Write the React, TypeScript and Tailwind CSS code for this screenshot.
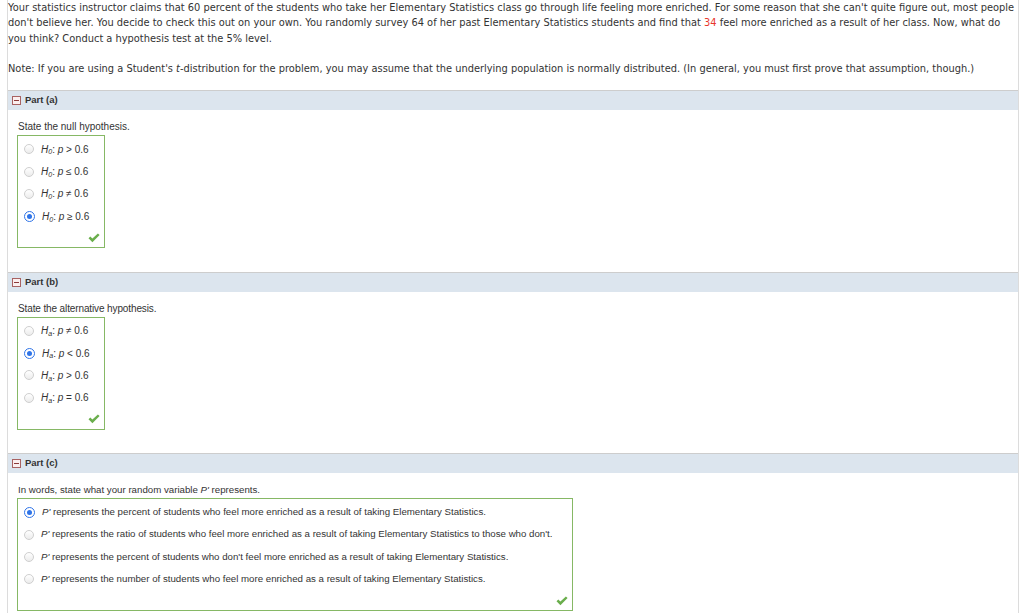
import { ReactElement, ReactNode } from "react";

const sans = { fontFamily: '"Liberation Sans", Arial, sans-serif' };
const verdana = { fontFamily: '"DejaVu Sans", Verdana, sans-serif' };

const Radio = ({ checked }: { checked?: boolean }): ReactElement =>
  checked ? (
    <span className="flex h-[11px] w-[11px] shrink-0 items-center justify-center rounded-full border-[1.5px] border-[#2f74e8] bg-white">
      <span className="h-[5px] w-[5px] rounded-full bg-[#2f74e8]" />
    </span>
  ) : (
    <span className="h-[10px] w-[10px] shrink-0 rounded-full border border-[#cfcfcf] bg-gradient-to-b from-white to-[#ececec]" />
  );

const Check = (): ReactElement => (
  <svg width="12" height="10" viewBox="0 0 12 10">
    <path d="M0.5 5.2 L2.3 3.6 L4.4 5.6 L9.9 0.4 L11.6 2 L4.4 9.2 Z" fill="#6aae4c" />
  </svg>
);

const MinusBox = (): ReactElement => (
  <span className="flex h-[9px] w-[9px] items-center justify-center border border-[#a86262] bg-[#fbefef]">
    <span className="h-px w-[5px] bg-[#8c3a3a]" />
  </span>
);

const H = ({ sub }: { sub: string }): ReactElement => (
  <>
    <i>H</i>
    <sub className="text-[7px] italic">{sub}</sub>:{" "}
  </>
);

interface Option {
  label: ReactNode;
  checked?: boolean;
}

const OptionBox = ({ options, width, text }: { options: Option[]; width: string; text: string }): ReactElement => (
  <div className={`flex h-[113px] flex-col border border-[#86b865] pt-[2px] ${width}`}>
    {options.map((o, i) => (
      <div key={i} className="flex h-[22.4px] items-center gap-[7px] pl-[6px]">
        <Radio checked={o.checked} />
        <span className={`whitespace-nowrap ${text}`}>{o.label}</span>
      </div>
    ))}
    <div className="mt-[5px] flex justify-end pr-[4px]">
      <Check />
    </div>
  </div>
);

const Part = ({
  name,
  prompt,
  promptClass,
  children,
}: {
  name: string;
  prompt: ReactNode;
  promptClass: string;
  children: ReactNode;
}): ReactElement => (
  <section className="mb-[23.5px]">
    <div className="flex h-[20px] items-center gap-[4px] border-t border-[#cdcdcd] bg-[#dce5ee] pl-[4px]">
      <MinusBox />
      <span className="text-[9.5px] font-bold text-[#333]">{name}</span>
    </div>
    <div className="pl-[9px] pt-[10px] text-[10px] text-[#333]">
      <div className={`mb-[1px] h-[14px] whitespace-nowrap pl-[1px] leading-[14px] ${promptClass}`}>{prompt}</div>
      {children}
    </div>
  </section>
);

const nullOptions: Option[] = [
  { label: <><H sub="0" /><i>p</i> &gt; 0.6</> },
  { label: <><H sub="0" /><i>p</i> ≤ 0.6</> },
  { label: <><H sub="0" /><i>p</i> ≠ 0.6</> },
  { label: <><H sub="0" /><i>p</i> ≥ 0.6</>, checked: true },
];

const altOptions: Option[] = [
  { label: <><H sub="a" /><i>p</i> ≠ 0.6</> },
  { label: <><H sub="a" /><i>p</i> &lt; 0.6</>, checked: true },
  { label: <><H sub="a" /><i>p</i> &gt; 0.6</> },
  { label: <><H sub="a" /><i>p</i> = 0.6</> },
];

const pOptions: Option[] = [
  {
    label: <><i>P'</i> represents the percent of students who feel more enriched as a result of taking Elementary Statistics.</>,
    checked: true,
  },
  {
    label: <><i>P'</i> represents the ratio of students who feel more enriched as a result of taking Elementary Statistics to those who don't.</>,
  },
  {
    label: <><i>P'</i> represents the percent of students who don't feel more enriched as a result of taking Elementary Statistics.</>,
  },
  {
    label: <><i>P'</i> represents the number of students who feel more enriched as a result of taking Elementary Statistics.</>,
  },
];

export default function App(): ReactElement {
  return (
    <div className="h-[613px] w-[1024px] overflow-hidden bg-white" style={sans}>
      <div className="ml-[7px] h-full w-[1012px] border-x border-[#dcdcdc]">
        <div className="h-[90px] whitespace-nowrap text-[9.85px] leading-[15.3px] text-[#333]" style={verdana}>
          Your statistics instructor claims that 60 percent of the students who take her Elementary Statistics class go
          through life feeling more enriched. For some reason that she can't quite figure out, most people
          <br />
          don't believe her. You decide to check this out on your own. You randomly survey 64 of her past Elementary
          Statistics students and find that <span className="text-[#e8352b]">34</span> feel more enriched as a result of
          her class. Now, what do
          <br />
          you think? Conduct a hypothesis test at the 5% level.
          <br />
          <br />
          Note: If you are using a Student's <i>t</i>-distribution for the problem, you may assume that the underlying
          population is normally distributed. (In general, you must first prove that assumption, though.)
        </div>

        <Part name="Part (a)" prompt="State the null hypothesis." promptClass="">
          <OptionBox options={nullOptions} width="w-[88px]" text="" />
        </Part>

        <Part name="Part (b)" prompt="State the alternative hypothesis." promptClass="tracking-[-0.12px]">
          <OptionBox options={altOptions} width="w-[88px]" text="" />
        </Part>

        <Part
          name="Part (c)"
          promptClass="text-[9.7px]"
          prompt={
            <>
              In words, state what your random variable <i>P'</i> represents.
            </>
          }
        >
          <OptionBox options={pOptions} width="w-[556px]" text="text-[9.7px]" />
        </Part>
      </div>
    </div>
  );
}
